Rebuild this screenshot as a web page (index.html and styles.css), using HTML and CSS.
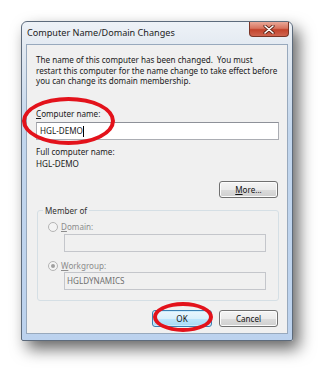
FILE: index.html
```html
<!DOCTYPE html>
<html lang="en">
<head>
	<meta charset="UTF-8">
	<title>Computer Name/Domain Changes</title>
	<link rel="stylesheet" href="styles.css">
</head>
<body>
	<div class="page">
		<div class="window">
			<div class="titlebar">
				<span class="title">Computer Name/Domain Changes</span>
				<a href="javascript:void(0);" class="close">
					<svg width="12" height="9" viewBox="0 0 12 9"><path d="M2 1 L10 8 M10 1 L2 8" stroke="#5a2418" stroke-width="3.2" stroke-linecap="round"/><path d="M2 1 L10 8 M10 1 L2 8" stroke="#fff" stroke-width="1.6" stroke-linecap="round"/></svg>
				</a>
			</div>
			<div class="client">
				<p class="intro">The name of this computer has been changed.&nbsp; You must<br>restart this computer for the name change to take effect before<br>you can change its domain membership.</p>

				<p class="label name-label"><u>C</u>omputer name:</p>
				<div class="field">HGL-DEMO<span class="caret"></span></div>

				<p class="label full-label">Full computer name:</p>
				<p class="label full-value">HGL-DEMO</p>

				<div class="more-row">
					<a href="javascript:void(0);" class="btn"><u>M</u>ore...</a>
				</div>

				<fieldset class="group">
					<legend>Member of</legend>
					<div class="radio-row">
						<span class="radio"></span>
						<span class="disabled"><u>D</u>omain:</span>
					</div>
					<div class="field field-off"></div>
					<div class="radio-row">
						<span class="radio checked"></span>
						<span class="disabled"><u>W</u>orkgroup:</span>
					</div>
					<div class="field field-off">HGLDYNAMICS</div>
				</fieldset>

				<div class="actions">
					<a href="javascript:void(0);" class="btn btn-default">OK</a>
					<a href="javascript:void(0);" class="btn">Cancel</a>
				</div>
			</div>
		</div>

		<!-- red marks drawn over the screenshot -->
		<span class="mark mark-name"></span>
		<span class="mark mark-ok"></span>
	</div>
</body>
</html>
```

FILE: styles.css
```css
* {
	margin: 0;
	padding: 0;
	box-sizing: border-box;
}
body {
	background: #fff;
	font-family: "Noto Sans", "Open Sans", sans-serif;
	font-size: 8.1px;
	color: #1a1a1a;
}
a {
	color: inherit;
	text-decoration: none;
}
.page {
	position: relative;
	width: 335px;
	height: 384px;
	padding: 21px 0 0 21px;
}

.window {
	width: 272px;
	height: 320px;
	border: 1px solid #5d6b7c;
	border-radius: 6px 6px 2px 2px;
	background: linear-gradient(#eef2f7 0, #e2e9f1 26px, #c2d6ed 110px, #bcd2ee 100%);
	box-shadow: 6px 8px 16px rgba(0, 0, 0, .6);
	display: flex;
	flex-direction: column;
}

.titlebar {
	height: 22px;
	display: flex;
	align-items: flex-start;
	padding-left: 5px;
	padding-right: 3px;
}
.title {
	line-height: 22px;
	font-size: 9.1px;
	color: #1c1c1c;
}
.close {
	margin-left: auto;
	width: 40px;
	height: 15px;
	border: 1px solid #7a3526;
	border-top: none;
	border-radius: 0 0 4px 4px;
	background: linear-gradient(#e9a898 0, #d8745f 45%, #c3432c 55%, #cf6550 100%);
	display: flex;
	align-items: center;
	justify-content: center;
}

.client {
	flex: 1;
	margin: 0 4px 6px 4px;
	border: 1px solid #98a9bd;
	background: #f0f0f0;
	padding: 10px 8px 0 9px;
}

.intro {
	line-height: 10.5px;
	white-space: nowrap;
}
.label {
	line-height: 10.5px;
}
.name-label {
	margin-top: 22px;
}
.full-label {
	margin-top: 7px;
}
.full-value {
	margin-top: 1.5px;
}

.field {
	height: 18px;
	margin-top: 3px;
	border: 1px solid #abadb3;
	border-top-color: #8e9199;
	background: #fff;
	padding-left: 3px;
	line-height: 16px;
	display: flex;
	align-items: center;
}
.caret {
	width: 1px;
	height: 11px;
	background: #000;
}
.field-off {
	margin: 0 12px 0 26px;
	background: #f0f0f0;
	border-color: #c4c6cb;
	color: #707070;
	padding-left: 2px;
}

.more-row {
	display: flex;
	justify-content: flex-end;
	margin-top: 11px;
}

.btn {
	width: 59px;
	height: 17px;
	margin-right: 1px;
	border: 1px solid #707070;
	border-radius: 3px;
	background: linear-gradient(#f4f4f4 0, #ebebeb 50%, #dcdcdc 51%, #cfcfcf 100%);
	box-shadow: inset 0 0 0 1px #fcfcfc;
	text-align: center;
	line-height: 15px;
	color: #111;
}
.btn-default {
	width: 60px;
	border-color: #3c7fb1;
	background: linear-gradient(#eaf6fd 0, #d9f0fc 50%, #bee6fd 51%, #a7d9f5 100%);
	box-shadow: inset 0 0 0 1px #c9ecfd;
}

.group {
	margin: 8px 0 0 1px;
	border: 1px solid #d5dfe5;
	border-radius: 3px;
	height: 95px;
	padding: 0;
}
.group legend {
	margin-left: 5px;
	padding: 0 2px;
	line-height: 10.5px;
	color: #333;
}
.radio-row {
	display: flex;
	align-items: center;
	gap: 3px;
	margin: 6px 0 0 10px;
	line-height: 10.5px;
}
.radio-row + .field-off {
	margin-top: 1px;
}
.field-off + .radio-row {
	margin-top: 9px;
}
.radio {
	width: 10px;
	height: 10px;
	border: 1px solid #b4b4b4;
	border-radius: 50%;
	background: #f4f4f4;
	display: flex;
	align-items: center;
	justify-content: center;
}
.radio.checked::after {
	content: "";
	width: 4px;
	height: 4px;
	border-radius: 50%;
	background: #a0a0a0;
}
.disabled {
	color: #8c8c8c;
}

.actions {
	display: flex;
	justify-content: flex-end;
	gap: 6px;
	margin-top: 9px;
}

.mark {
	position: absolute;
	border: 4px solid #e3121b;
	border-radius: 50%;
}
.mark-name {
	left: 22px;
	top: 97px;
	width: 93px;
	height: 48px;
}
.mark-ok {
	left: 153px;
	top: 302px;
	width: 60px;
	height: 30px;
}
```
